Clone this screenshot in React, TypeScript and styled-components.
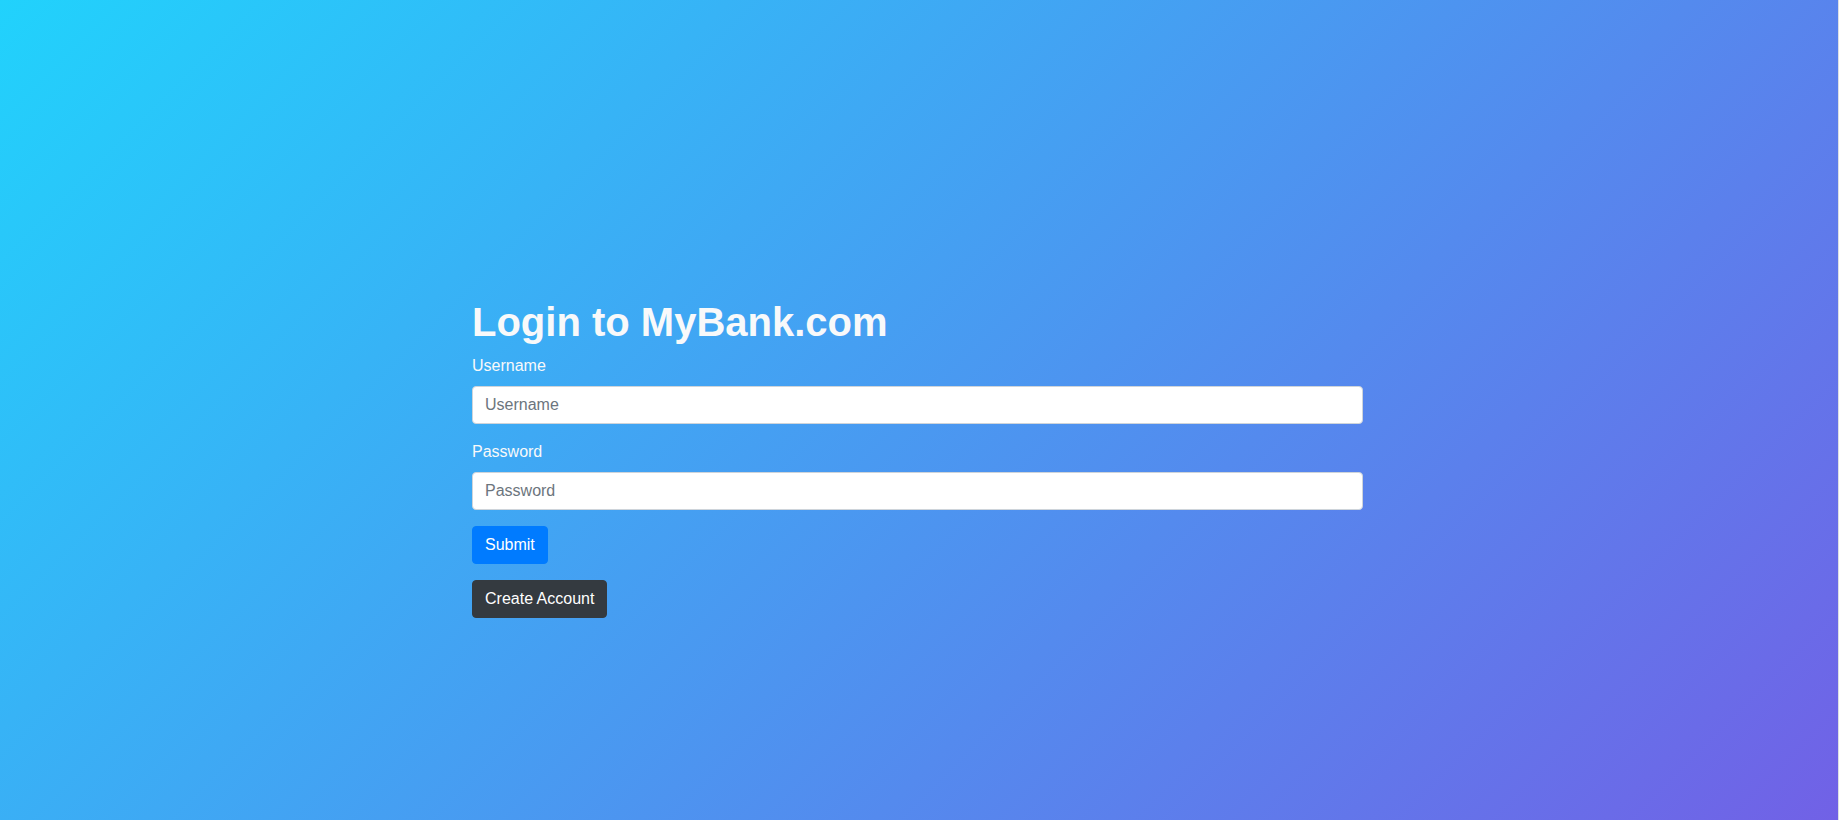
import React from "react";
import styled, { createGlobalStyle } from "styled-components";

const GlobalStyle = createGlobalStyle`
  html, body {
    margin: 0;
    padding: 0;
    height: 100%;
    background: #ffffff;
  }
  #root {
    height: 100%;
  }
  * {
    box-sizing: border-box;
  }
`;

const Shell = styled.div`
  display: flex;
  width: 100%;
  height: 820px;
  overflow: hidden;
`;

const Page = styled.main`
  flex: 1;
  height: 100%;
  background: linear-gradient(135deg, #21d2fc 0%, #7161e6 100%);
  font-family: "Liberation Sans", Arial, Helvetica, sans-serif;
  color: #f8f9fa;
  padding-top: 298px;
`;

const Gutter = styled.div`
  width: 3px;
  height: 100%;
  border-left: 1px solid #dcdfe4;
  background: #ffffff;
`;

const Container = styled.div`
  width: 894px;
  margin: 0 auto;
  padding: 0 3px 0 0;
`;

const Title = styled.h1`
  margin: 0 0 8px;
  font-size: 40px;
  line-height: 1.2;
  font-weight: 700;
  color: #f8f9fa;
`;

const Form = styled.form`
  display: flex;
  flex-direction: column;
  align-items: flex-start;
`;

const Group = styled.div`
  width: 100%;
  margin-bottom: 16px;
`;

const Label = styled.label`
  display: inline-block;
  margin-bottom: 8px;
  font-size: 16px;
  line-height: 24px;
  color: #f8f9fa;
`;

const Input = styled.input`
  display: block;
  width: 100%;
  height: 38px;
  padding: 6px 12px;
  font-family: inherit;
  font-size: 16px;
  line-height: 24px;
  color: #495057;
  background: #ffffff;
  border: 1px solid #ced4da;
  border-radius: 4px;
  outline: none;

  &::placeholder {
    color: #6c757d;
    opacity: 1;
  }
`;

const Button = styled.button<{ $variant: "primary" | "dark" }>`
  display: inline-block;
  height: 38px;
  padding: 6px 12px;
  margin-bottom: 16px;
  font-family: inherit;
  font-size: 16px;
  line-height: 24px;
  color: #ffffff;
  border-radius: 4px;
  cursor: pointer;
  background: ${(p) => (p.$variant === "primary" ? "#007bff" : "#343a40")};
  border: 1px solid ${(p) => (p.$variant === "primary" ? "#007bff" : "#343a40")};
`;

export default function App() {
  return (
    <>
      <GlobalStyle />
      <Shell>
        <Page>
          <Container>
            <Title>Login to MyBank.com</Title>
            <Form onSubmit={(e) => e.preventDefault()}>
              <Group>
                <Label htmlFor="username">Username</Label>
                <Input id="username" type="text" placeholder="Username" />
              </Group>
              <Group>
                <Label htmlFor="password">Password</Label>
                <Input id="password" type="password" placeholder="Password" />
              </Group>
              <Button type="submit" $variant="primary">
                Submit
              </Button>
              <Button type="button" $variant="dark">
                Create Account
              </Button>
            </Form>
          </Container>
        </Page>
        <Gutter />
      </Shell>
    </>
  );
}
